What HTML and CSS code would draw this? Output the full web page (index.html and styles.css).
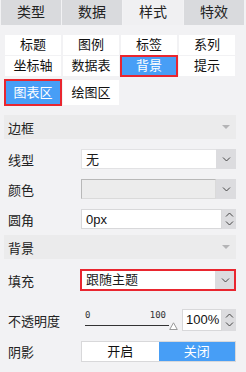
FILE: index.html
```html
<!DOCTYPE html>
<html>
<head>
  <title>样式设置</title>
  <link rel="stylesheet" href="styles.css">
</head>
<body>
  <div class="tabs">
    <div class="tab">类型</div>
    <div class="tab">数据</div>
    <div class="tab active">样式</div>
    <div class="tab">特效</div>
  </div>

  <div class="subtabs">
    <div class="sub">标题</div>
    <div class="sub">图例</div>
    <div class="sub">标签</div>
    <div class="sub">系列</div>
    <div class="sub">坐标轴</div>
    <div class="sub">数据表</div>
    <div class="sub active">背景</div>
    <div class="sub">提示</div>
  </div>
  <div class="subtabs tall">
    <div class="sub active">图表区</div>
    <div class="sub">绘图区</div>
  </div>

  <div class="section-head">边框<span class="caret"></span></div>

  <div class="form-row">
    <div class="label">线型</div>
    <div class="select">
      <span class="value">无</span>
      <span class="drop"><svg width="9" height="5" viewBox="0 0 9 5"><path d="M1 .5L4.5 4L8 .5" fill="none" stroke="#444" stroke-width="1"/></svg></span>
    </div>
  </div>
  <div class="form-row">
    <div class="label">颜色</div>
    <div class="select disabled">
      <span class="value"></span>
      <span class="drop"><svg width="9" height="5" viewBox="0 0 9 5"><path d="M1 .5L4.5 4L8 .5" fill="none" stroke="#444" stroke-width="1"/></svg></span>
    </div>
  </div>
  <div class="form-row">
    <div class="label">圆角</div>
    <div class="number wide">
      <span class="value">0px</span>
      <span class="spin">
        <svg width="9" height="5" viewBox="0 0 9 5"><path d="M1 4.5L4.5 1L8 4.5" fill="none" stroke="#444" stroke-width="1"/></svg>
        <svg width="9" height="5" viewBox="0 0 9 5"><path d="M1 .5L4.5 4L8 .5" fill="none" stroke="#444" stroke-width="1"/></svg>
      </span>
    </div>
  </div>

  <div class="section-head small-gap">背景<span class="caret"></span></div>

  <div class="form-row fill">
    <div class="label">填充</div>
    <div class="select marked">
      <span class="value">跟随主题</span>
      <span class="drop"><svg width="9" height="5" viewBox="0 0 9 5"><path d="M1 .5L4.5 4L8 .5" fill="none" stroke="#444" stroke-width="1"/></svg></span>
    </div>
  </div>
  <div class="form-row opacity">
    <div class="label">不透明度</div>
    <div class="slider">
      <div class="ticks"><span>0</span><span>100</span></div>
      <div class="track">
        <div class="line"></div>
        <svg width="9" height="8" viewBox="0 0 9 8"><path d="M4.5 .8L8.3 7.5H.7Z" fill="#fff" stroke="#999" stroke-width="1"/></svg>
      </div>
    </div>
    <div class="number short">
      <span class="value">100%</span>
      <span class="spin">
        <svg width="9" height="5" viewBox="0 0 9 5"><path d="M1 4.5L4.5 1L8 4.5" fill="none" stroke="#444" stroke-width="1"/></svg>
        <svg width="9" height="5" viewBox="0 0 9 5"><path d="M1 .5L4.5 4L8 .5" fill="none" stroke="#444" stroke-width="1"/></svg>
      </span>
    </div>
  </div>
  <div class="form-row shadow">
    <div class="label">阴影</div>
    <div class="toggle">
      <div class="opt">开启</div>
      <div class="opt on">关闭</div>
    </div>
  </div>
</body>
</html>
```

FILE: styles.css
```css
/* style panel */

body {
  margin: 0;
  background: #f2f2f4;
  font-family: "Liberation Sans", "Noto Sans CJK SC", sans-serif;
  font-size: 13px;
  color: #1a1a1a;
}

/* top tabs */
.tabs {
  display: flex;
  gap: 1px;
  padding-left: 1px;
  height: 25px;
}

.tab {
  width: 60px;
  background: #d9dadd;
  text-align: center;
  line-height: 25px;
  font-size: 14px;
  color: #222;
}

.tab.active {
  background: #f0f0f2;
}

/* second level tabs */
.subtabs {
  display: grid;
  grid-template-columns: repeat(4, 56px);
  grid-auto-rows: 20px;
  column-gap: 2px;
  row-gap: 1px;
  margin-top: 10px;
  padding-left: 5px;
}

.subtabs.tall {
  grid-auto-rows: 25px;
  margin-top: 4px;
}

.sub {
  background: #fff;
  text-align: center;
  line-height: 20px;
  color: #111;
}

.tall .sub {
  line-height: 25px;
}

.sub.active {
  background: #479ef6;
  color: #fff;
  outline: 2px solid #e9262f;
  outline-offset: -1px;
}

/* group headers */
.section-head {
  display: flex;
  justify-content: space-between;
  align-items: center;
  margin: 10px 10px 0 4px;
  padding: 0 6px 0 4px;
  height: 24px;
  background: #ebebec;
  color: #222;
}

.section-head.small-gap {
  margin-top: 6px;
}

.caret {
  width: 0;
  height: 0;
  border-left: 4px solid transparent;
  border-right: 4px solid transparent;
  border-top: 4px solid #b4b4b6;
}

/* form rows */
.form-row {
  display: flex;
  align-items: center;
  margin-top: 10px;
  padding-left: 8px;
  height: 20px;
}

.form-row.fill {
  margin-top: 11px;
}

.form-row.opacity {
  margin-top: 19px;
  height: 22px;
}

.form-row.shadow {
  height: 21px;
}

.label {
  width: 73px;
  color: #222;
}

.select,
.number {
  display: flex;
  height: 100%;
  box-sizing: border-box;
}

.select {
  width: 155px;
  background: #fff;
}

.select .value,
.number .value {
  flex: 1;
  padding-left: 4px;
  line-height: 20px;
  border: 1px solid #e2e2e4;
  border-right: none;
}

.select .drop {
  width: 20px;
  display: flex;
  align-items: center;
  justify-content: center;
  background: #dcdcdf;
}

.select.disabled .value {
  background: #ececec;
  border: 1px solid #b8b8b8;
  border-right-color: #dadada;
  border-bottom-color: #dadada;
}

.select.marked {
  width: 154px;
  outline: 2px solid #e9262f;
  outline-offset: -1px;
}

.select.marked .value {
  border: none;
  padding-left: 5px;
}

.number {
  background: #fff;
}

.number.wide {
  width: 155px;
}

.number.short {
  width: 54px;
  margin-left: 4px;
}

.number .value {
  border: 1px solid #d8d8da;
  color: #111;
}

.number.short .value {
  line-height: 20px;
  padding-left: 3px;
}

.spin {
  width: 14px;
  display: flex;
  flex-direction: column;
  align-items: center;
  justify-content: center;
  gap: 4px;
  background: #dcdcdf;
}

/* opacity slider */
.slider {
  width: 97px;
  height: 22px;
  padding-left: 4px;
  box-sizing: border-box;
}

.ticks {
  display: flex;
  justify-content: space-between;
  padding-right: 12px;
  font-family: "DejaVu Sans Mono", monospace;
  font-size: 9px;
  line-height: 10px;
  color: #333;
  margin-top: 1px;
}

.track {
  display: flex;
  align-items: flex-end;
  height: 10px;
}

.track .line {
  flex: 1;
  height: 1px;
  margin-bottom: 4px;
  background: #333;
}

/* on / off toggle */
.toggle {
  display: flex;
  width: 155px;
  height: 100%;
  border: 1px solid #d8d8da;
  box-sizing: border-box;
  background: #fff;
}

.opt {
  flex: 1;
  text-align: center;
  line-height: 19px;
  color: #111;
}

.opt.on {
  background: #479ef6;
  color: #fff;
}
```
